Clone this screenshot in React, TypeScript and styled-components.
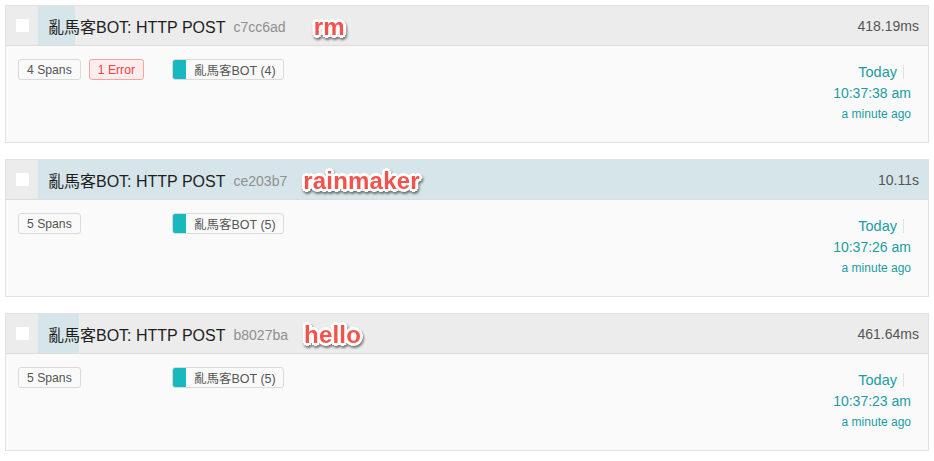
import React from "react";
import styled, { createGlobalStyle } from "styled-components";

const GlobalStyle = createGlobalStyle`
  html, body { margin: 0; padding: 0; background: #ffffff; }
  body { font-family: "Liberation Sans", "Noto Sans CJK TC", Arial, sans-serif; color: #333; }
`;

const Page = styled.div`
  padding: 5px 5px 0 5px;
  width: 934px;
  box-sizing: border-box;
  display: flex;
  flex-direction: column;
  gap: 16px;
`;

const Card = styled.div`
  border: 1px solid #e1e1e1;
  background: #fafafa;
  display: flex;
  flex-direction: column;
`;

const Header = styled.div`
  display: flex;
  height: 39px;
  background: #ececec;
  border-bottom: 1px solid #dcdcdc;
`;

const CheckCell = styled.div`
  width: 32px;
  flex: none;
  display: flex;
  align-items: center;
  justify-content: center;
`;

const Checkbox = styled.span`
  width: 15px;
  height: 15px;
  background: #ffffff;
  border: 1px solid #ececec;
  border-radius: 2px;
  box-sizing: border-box;
  margin-top: -1px;
`;

const HeaderMain = styled.div`
  position: relative;
  flex: 1;
  display: flex;
  align-items: center;
  padding: 0 9px 0 10px;
`;

const DurationBar = styled.div`
  position: absolute;
  left: 0;
  top: 0;
  bottom: 0;
  background: #d6e5e9;
`;

const Title = styled.span`
  position: relative;
  font-size: 16px;
  color: #1e1e1e;
`;

const TraceId = styled.span`
  position: relative;
  font-size: 14px;
  color: #8f8f8f;
  margin-left: 8px;
  margin-top: 2px;
`;

const Note = styled.span<{ $gap: number }>`
  position: relative;
  margin-left: ${(p) => p.$gap}px;
  margin-top: 3px;
  font-size: 24px;
  font-weight: 700;
  color: #f4534b;
  letter-spacing: 0.2px;
  text-shadow:
    2px 0 0 #fff, -2px 0 0 #fff, 0 2px 0 #fff, 0 -2px 0 #fff,
    2px 2px 0 #fff, -2px -2px 0 #fff, 2px -2px 0 #fff, -2px 2px 0 #fff,
    3px 0 0 #fff, -3px 0 0 #fff, 0 3px 0 #fff, 0 -3px 0 #fff;
  filter: drop-shadow(1px 2px 1px rgba(0, 0, 0, 0.5));
`;

const Duration = styled.span`
  position: relative;
  margin-left: auto;
  font-size: 14px;
  color: #555;
`;

const Body = styled.div`
  height: 96px;
  display: flex;
  padding: 13px 17px 0 12px;
  box-sizing: border-box;
`;

const Badges = styled.div`
  width: 154px;
  flex: none;
  display: flex;
  gap: 8px;
  align-items: flex-start;
`;

const Badge = styled.span<{ $error?: boolean }>`
  height: 21px;
  box-sizing: border-box;
  display: inline-flex;
  align-items: center;
  padding: 0 8px;
  font-size: 12.2px;
  border-radius: 3px;
  border: 1px solid ${(p) => (p.$error ? "#f8a4a4" : "#dadada")};
  background: ${(p) => (p.$error ? "#ffecec" : "#fafafa")};
  color: ${(p) => (p.$error ? "#f03e44" : "#555")};
`;

const Services = styled.div`
  flex: 1;
  display: flex;
  align-items: flex-start;
`;

const ServiceTag = styled.span`
  height: 21px;
  box-sizing: border-box;
  display: inline-flex;
  align-items: center;
  border: 1px solid #dadada;
  border-radius: 3px;
  overflow: hidden;
  font-size: 12.5px;
  color: #555;
  padding-right: 7px;
`;

const Swatch = styled.span<{ $color: string }>`
  width: 14px;
  align-self: stretch;
  background: ${(p) => p.$color};
  margin-right: 8px;
  margin-left: -1px;
  margin-top: -1px;
  margin-bottom: -1px;
  border-radius: 3px 0 0 3px;
`;

const TimeCol = styled.div`
  display: flex;
  flex-direction: column;
  align-items: flex-end;
  color: #1b9ca2;
  padding-top: 3px;
`;

const Day = styled.span`
  font-size: 14.5px;
  line-height: 20px;
  margin-right: 7px;
  padding-right: 7px;
  position: relative;
  &::after {
    content: "";
    position: absolute;
    right: 0;
    top: 3px;
    bottom: 3px;
    width: 1px;
    background: #e2e2e2;
  }
`;

const Clock = styled.span`
  font-size: 14px;
  line-height: 22px;
`;

const Ago = styled.span`
  font-size: 12px;
  line-height: 20px;
`;

type Trace = {
  id: string;
  note: string;
  noteGap: number;
  duration: string;
  ms: number;
  spans: number;
  errors: number;
  time: string;
};

const MAX_MS = 10110;

const traces: Trace[] = [
  { id: "c7cc6ad", note: "rm", noteGap: 28, duration: "418.19ms", ms: 418.19, spans: 4, errors: 1, time: "10:37:38 am" },
  { id: "ce203b7", note: "rainmaker", noteGap: 16, duration: "10.11s", ms: 10110, spans: 5, errors: 0, time: "10:37:26 am" },
  { id: "b8027ba", note: "hello", noteGap: 16, duration: "461.64ms", ms: 461.64, spans: 5, errors: 0, time: "10:37:23 am" },
];

export default function App() {
  return (
    <>
      <GlobalStyle />
      <Page>
        {traces.map((t) => (
          <Card key={t.id}>
            <Header>
              <CheckCell>
                <Checkbox />
              </CheckCell>
              <HeaderMain>
                <DurationBar style={{ width: `${(t.ms / MAX_MS) * 100}%` }} />
                <Title>亂馬客BOT: HTTP POST</Title>
                <TraceId>{t.id}</TraceId>
                <Note $gap={t.noteGap}>{t.note}</Note>
                <Duration>{t.duration}</Duration>
              </HeaderMain>
            </Header>
            <Body>
              <Badges>
                <Badge>{t.spans} Spans</Badge>
                {t.errors > 0 && <Badge $error>{t.errors} Error</Badge>}
              </Badges>
              <Services>
                <ServiceTag>
                  <Swatch $color="#17b8be" />
                  亂馬客BOT ({t.spans})
                </ServiceTag>
              </Services>
              <TimeCol>
                <Day>Today</Day>
                <Clock>{t.time}</Clock>
                <Ago>a minute ago</Ago>
              </TimeCol>
            </Body>
          </Card>
        ))}
      </Page>
    </>
  );
}
